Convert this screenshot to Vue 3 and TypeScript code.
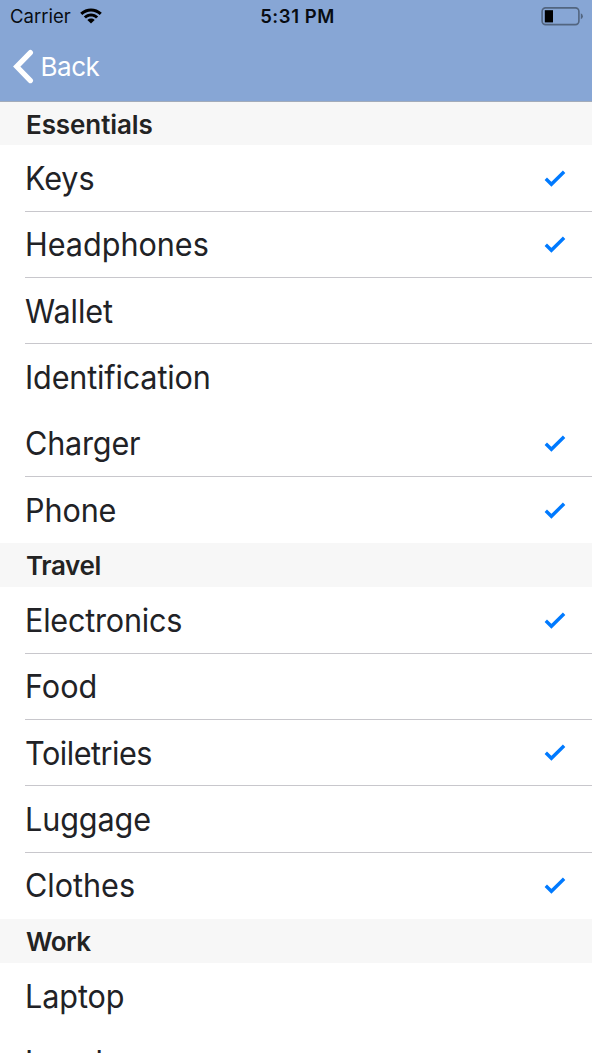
<script setup lang="ts">
interface Item { name: string; checked?: boolean; line?: boolean; spacing: number }
interface Section { title: string; spacing: number; items: Item[] }

const sections: Section[] = [
  {
    title: 'Essentials',
    spacing: -0.08,
    items: [
      { name: 'Keys', checked: true, line: true, spacing: -0.1 },
      { name: 'Headphones', checked: true, line: true, spacing: 0 },
      { name: 'Wallet', line: true, spacing: -0.08 },
      { name: 'Identification', spacing: -0.15 },
      { name: 'Charger', checked: true, line: true, spacing: -0.18 },
      { name: 'Phone', checked: true, spacing: -0.1 },
    ],
  },
  {
    title: 'Travel',
    spacing: -0.4,
    items: [
      { name: 'Electronics', checked: true, line: true, spacing: -0.22 },
      { name: 'Food', line: true, spacing: 0 },
      { name: 'Toiletries', checked: true, line: true, spacing: -0.48 },
      { name: 'Luggage', line: true, spacing: -0.08 },
      { name: 'Clothes', checked: true, spacing: 0 },
    ],
  },
  {
    title: 'Work',
    spacing: -0.5,
    items: [
      { name: 'Laptop', spacing: -0.08 },
      { name: 'Lunch', spacing: -0.1 },
    ],
  },
]
</script>

<template>
  <div class="screen">
    <header class="top">
      <div class="status">
        <div class="carrier">
          <span>Carrier</span>
          <svg class="wifi" width="22" height="16" viewBox="0 0 22 16">
            <path d="M0.2 4.8C6.2-1.1 15.8-1.1 21.8 4.8L19.7 6.9C14.8 2.2 7.2 2.2 2.3 6.9Z" />
            <path d="M3.8 8.4C7.9 4.5 14.1 4.5 18.2 8.4L16 10.5C13.1 7.9 8.9 7.9 6 10.5Z" />
            <path d="M7.3 11.9C9.5 10 12.5 10 14.7 11.9L11 15.6Z" />
          </svg>
        </div>
        <span class="time">5:31 PM</span>
        <svg class="battery" width="42" height="19" viewBox="0 0 42 19">
          <rect x="1.1" y="0.9" width="36.8" height="16.7" rx="3.5" fill="none" stroke="#526580" stroke-width="1.6" />
          <rect x="3.8" y="3.2" width="8.2" height="12.2" fill="#000" />
          <path d="M39.8 6.2Q41.9 7.1 41.9 9.2T39.8 12.3Z" fill="#526580" />
        </svg>
      </div>
      <a class="back">
        <svg width="22" height="36" viewBox="0 0 22 36">
          <path d="M18.4 3.6L4.7 17.6L18.4 31.6" fill="none" stroke="#fff" stroke-width="5.2" stroke-linecap="round" stroke-linejoin="miter" />
        </svg>
        <span>Back</span>
      </a>
    </header>
    <section v-for="s in sections" :key="s.title">
      <h2><span :style="{ letterSpacing: s.spacing + 'px' }">{{ s.title }}</span></h2>
      <ul>
        <li v-for="i in s.items" :key="i.name" :class="{ line: i.line }">
          <span class="name" :style="{ letterSpacing: i.spacing + 'px' }">{{ i.name }}</span>
          <svg v-if="i.checked" width="22" height="18" viewBox="0 0 22 18">
            <path d="M1.8 8.8L7.4 14.3L20.1 1.7" fill="none" stroke="#007aff" stroke-width="3.4" />
          </svg>
        </li>
      </ul>
    </section>
  </div>
</template>

<style>
body { margin: 0; overflow: hidden; }
</style>

<style scoped>
.screen { width: 592px; height: 1053px; overflow: hidden; background: #fff; color: #212226; font-family: Inter, "Liberation Sans", sans-serif; }
.top { box-sizing: border-box; height: 102px; background: #87a6d5; border-bottom: 1px solid #a3acba; }
.status { display: grid; grid-template-columns: 1fr auto 1fr; height: 32px; align-items: center; padding: 0 9px 0 10px; color: #080c12; font-size: 18.5px; }
.carrier { display: flex; align-items: center; gap: 9px; }
.wifi { fill: #000; }
.time { padding-left: 2px; font-weight: 600; letter-spacing: 0.55px; }
.battery { justify-self: end; }
.back { display: flex; align-items: center; height: 69px; padding-left: 12px; gap: 6.5px; color: #fff; font-size: 26px; letter-spacing: -0.45px; }
h2 { display: flex; align-items: center; box-sizing: border-box; height: 44px; margin: 0; padding: 2px 0 0 26px; background: #f7f7f7; font-size: 26px; font-weight: 600; line-height: 42px; color: #232323; }
section:nth-of-type(1) h2 { height: 43.4px; padding-top: 1.6px; }
ul { margin: 0; padding: 0; list-style: none; }
li { display: flex; align-items: center; justify-content: space-between; box-sizing: border-box; height: 66.32px; margin-left: 25px; padding: 1.9px 26px 0 0; border-bottom: 1px solid transparent; font-size: 32px; line-height: 64px; }
li.line { border-bottom-color: #c8c7cc; }
section:nth-of-type(3) li { padding-top: 3px; }
.name { transform: scaleX(0.955); transform-origin: left center; }
</style>
